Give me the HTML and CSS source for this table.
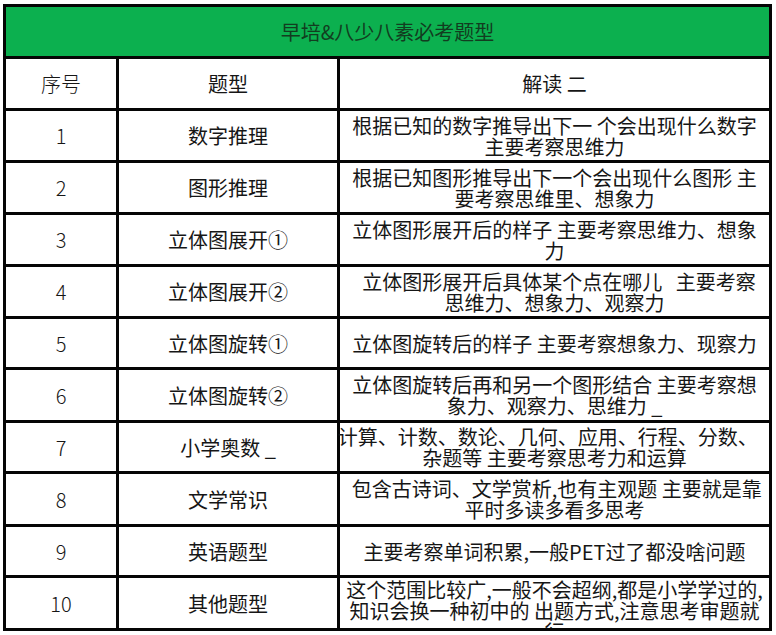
FILE: index.html
```html
<!DOCTYPE html>
<html lang="zh-CN">
<head>
<meta charset="utf-8">
<title>早培&amp;八少八素必考题型</title>
<link rel="stylesheet" href="styles.css">
</head>
<body>
<div class="sheet">
  <div class="cell title">早培&amp;八少八素必考题型</div>

  <div class="cell num">序号</div>
  <div class="cell type">题型</div>
  <div class="cell desc">解读 二</div>

  <div class="cell num">1</div>
  <div class="cell type">数字推理</div>
  <div class="cell desc"><div class="lines">根据已知的数字推导出下一 个会出现什么数字<br>主要考察思维力</div></div>

  <div class="cell num">2</div>
  <div class="cell type">图形推理</div>
  <div class="cell desc"><div class="lines">根据已知图形推导出下一个会出现什么图形 主<br>要考察思维里、想象力</div></div>

  <div class="cell num">3</div>
  <div class="cell type">立体图展开①</div>
  <div class="cell desc"><div class="lines">立体图形展开后的样子 主要考察思维力、想象<br>力</div></div>

  <div class="cell num">4</div>
  <div class="cell type">立体图展开②</div>
  <div class="cell desc"><div class="lines">&nbsp;&nbsp;立体图形展开后具体某个点在哪儿&nbsp;&nbsp;&nbsp;主要考察<br>思维力、想象力、观察力</div></div>

  <div class="cell num">5</div>
  <div class="cell type">立体图旋转①</div>
  <div class="cell desc"><div class="lines">立体图旋转后的样子 主要考察想象力、现察力</div></div>

  <div class="cell num">6</div>
  <div class="cell type">立体图旋转②</div>
  <div class="cell desc"><div class="lines">立体图旋转后再和另一个图形结合 主要考察想<br>象力、观察力、思维力 _</div></div>

  <div class="cell num">7</div>
  <div class="cell type">小学奥数 _</div>
  <div class="cell desc"><div class="lines">计算、计数、数论、几何、应用、行程、分数、&nbsp;&nbsp;&nbsp;<br>杂题等 主要考察思考力和运算</div></div>

  <div class="cell num">8</div>
  <div class="cell type">文学常识</div>
  <div class="cell desc"><div class="lines">&nbsp;包含古诗词、文学赏析,也有主观题 主要就是靠<br>平时多读多看多思考</div></div>

  <div class="cell num">9</div>
  <div class="cell type">英语题型</div>
  <div class="cell desc"><div class="lines">主要考察单词积累,一般PET过了都没啥问题</div></div>

  <div class="cell num">10</div>
  <div class="cell type">其他题型</div>
  <div class="cell desc desc-overflow"><div class="lines">这个范围比较广,一般不会超纲,都是小学学过的,<br>知识会换一种初中的 出题方式,注意思考审题就<br>行</div></div>
</div>
</body>
</html>
```

FILE: styles.css
```css
html, body {
  margin: 0;
  padding: 0;
  background: #ffffff;
}

body {
  font-family: "Noto Sans CJK SC", "Noto Sans", sans-serif;
  color: #161616;
}

.sheet {
  display: grid;
  grid-template-columns: 110px 218px 429px;
  grid-template-rows: 49px 49px 49px 49px 49px 49px 48px 50px 48px 50px 48px 50px;
  gap: 3px;
  padding: 3px;
  margin: 4px 0 0 3px;
  width: max-content;
  background: #050505;
}

.cell {
  background: #ffffff;
  display: flex;
  align-items: center;
  justify-content: center;
  text-align: center;
  font-size: 20px;
  line-height: 21px;
  white-space: nowrap;
  min-width: 0;
}

.title {
  grid-column: 1 / -1;
  background: #0cb04f;
  color: #123d20;
}

.num {
  font-weight: 300;
}

.desc .lines {
  white-space: nowrap;
}

.desc-overflow {
  align-items: flex-start;
  overflow: hidden;
  padding-top: 1px;
}
```
